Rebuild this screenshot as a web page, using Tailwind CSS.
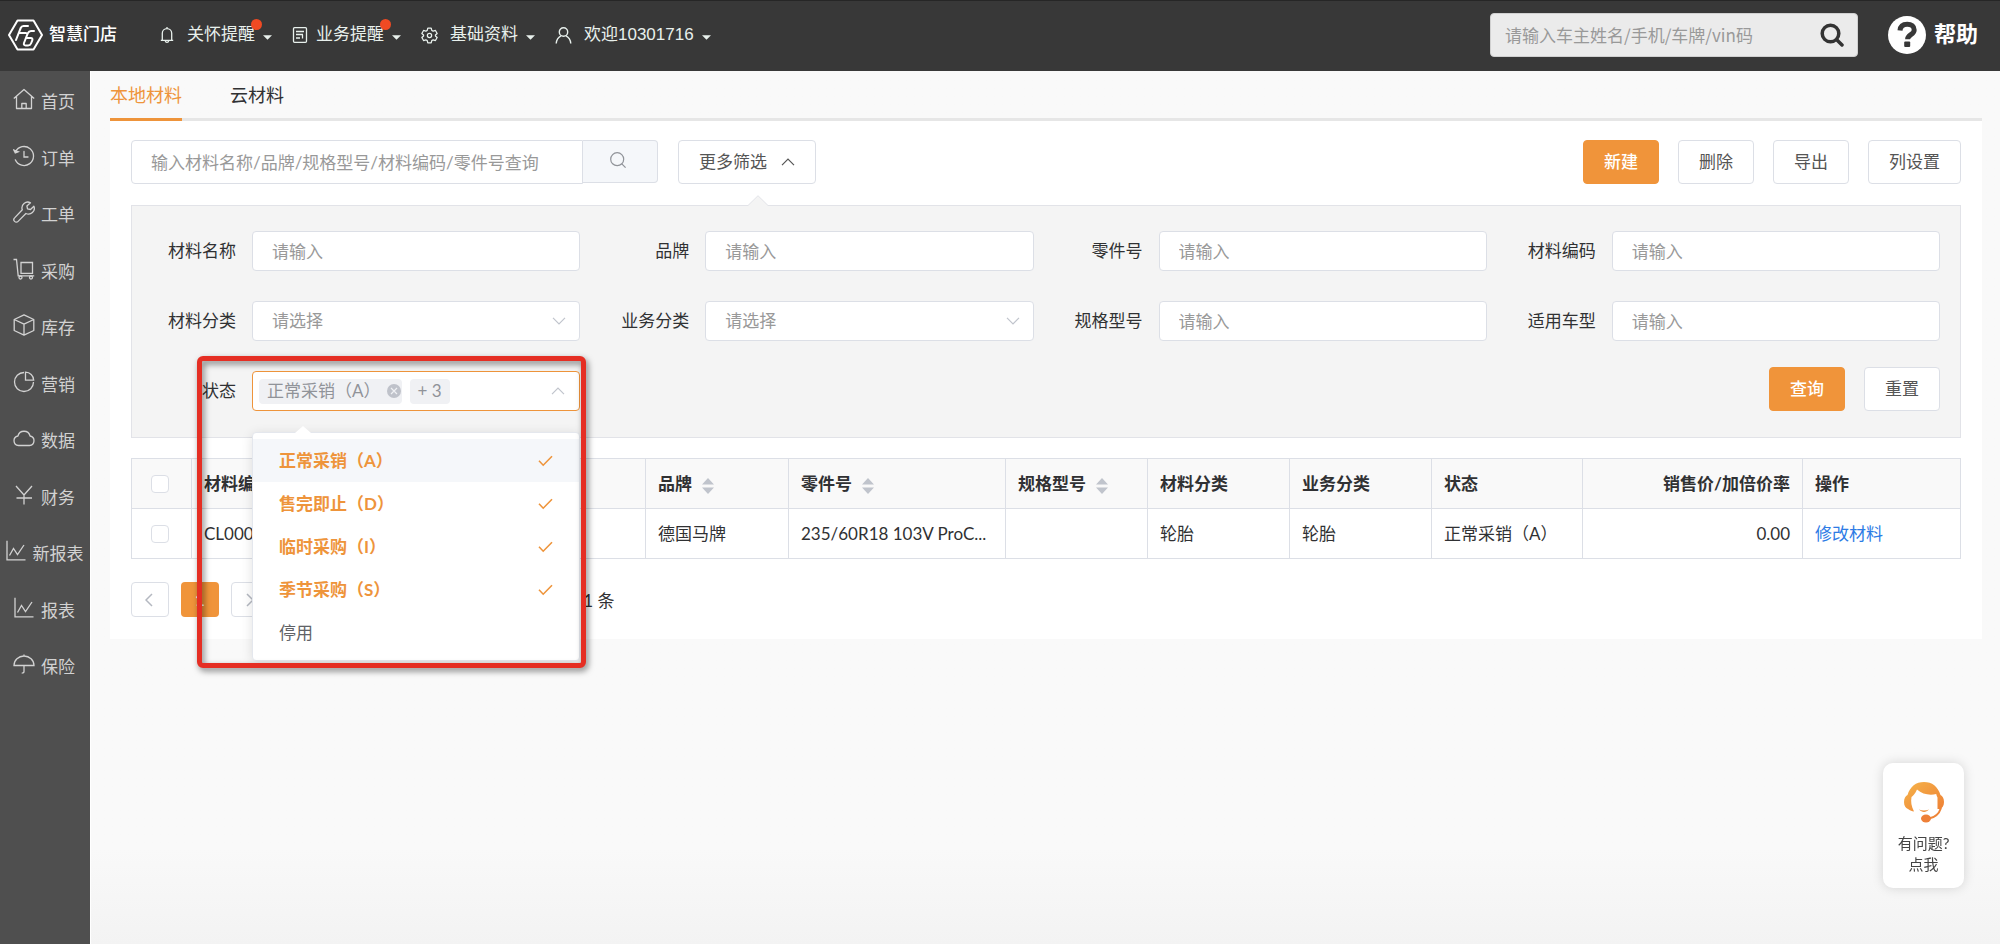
<!DOCTYPE html>
<html lang="zh-CN">
<head>
<meta charset="UTF-8">
<title>智慧门店 - 本地材料</title>
<script src="https://cdn.jsdelivr.net/npm/@tailwindcss/browser@4"></script>
</head>
<body class="flex min-h-screen flex-col bg-gradient-to-b from-[#f9f9f9] from-90% to-[#f3f3f3] text-[17px] leading-6 text-[#303133] font-[Lato,'Noto_Sans_CJK_SC',sans-serif]">

<header class="flex h-[71px] items-center border-t border-[#262626] bg-[#383838] pb-0.5 pl-2 pr-5 text-[#e8f0ec] font-['Liberation_Sans','Noto_Sans_CJK_SC',sans-serif]">
  <a href="#" class="flex items-center gap-1.5 text-white" aria-label="智慧门店">
    <svg class="h-8 w-[35px]" viewBox="0 0 35 32" fill="none" stroke="currentColor" stroke-width="2" stroke-linejoin="round" stroke-linecap="round"><path d="M9.500 1.500h16L34 16l-8.500 14.500h-16L1 16z"/><path d="M20 7h-4.500c-1.500 0-2.300.8-2.800 2L8 21M11 14h7M26 12h-3c-1.500 0-2.500.8-3.200 2.200L16 24c-.5 1.500.2 2.500 1.500 2.500H20c1.500 0 2.500-.7 3-2l1.300-3.200c.5-1.300-.2-2.300-1.500-2.300H18.500"/></svg>
    <span class="text-[17px] font-medium">智慧门店</span>
  </a>
  <nav class="ml-[42px] flex items-center gap-5">
    <a href="#" class="relative flex items-center">
      <svg class="mr-3 size-4" viewBox="0 0 16 16" fill="none" stroke="currentColor" stroke-width="1.300"><path d="M3.300 13.200V6.300a4.700 4.700 0 0 1 9.400 0v6.900M1.800 13.400h12.400M6.300 13.800c.3 2 3.100 2 3.400 0M8 1.800V0"/></svg>
      <span>关怀提醒</span>
      <svg class="ml-2 mt-1 h-[5px] w-[9px]" viewBox="0 0 10 5" fill="currentColor"><path d="M0 0h10L5 5z"/></svg>
      <span class="absolute -top-1 right-2.5 size-[11px] rounded-full bg-[#f04a23]"></span>
    </a>
    <a href="#" class="relative flex items-center">
      <svg class="mr-2 size-4" viewBox="0 0 16 16" fill="none" stroke="currentColor" stroke-width="1.300"><rect x="1.500" y=".7" width="13" height="14.600" rx="1"/><path d="M4 4.500h8M4 7.500h7M4 11h4M10.500 7.500v4"/></svg>
      <span>业务提醒</span>
      <svg class="ml-2 mt-1 h-[5px] w-[9px]" viewBox="0 0 10 5" fill="currentColor"><path d="M0 0h10L5 5z"/></svg>
      <span class="absolute -top-1 right-2.5 size-[11px] rounded-full bg-[#f04a23]"></span>
    </a>
    <a href="#" class="flex items-center">
      <svg class="mr-3 size-[17px]" viewBox="0 0 24 24" fill="none" stroke="currentColor" stroke-width="1.800" stroke-linejoin="round"><path d="M9.600 1.500h4.800l.8 3.200 2 1.200 3.200-1 2.400 4.200-2.400 2.300v1.200l2.400 2.300-2.400 4.200-3.200-1-2 1.200-.8 3.200H9.600l-.8-3.200-2-1.200-3.200 1L1.200 14.900l2.400-2.300v-1.200L1.200 9.100l2.400-4.200 3.200 1 2-1.200z"/><circle cx="12" cy="12" r="3"/></svg>
      <span>基础资料</span>
      <svg class="ml-2 mt-1 h-[5px] w-[9px]" viewBox="0 0 10 5" fill="currentColor"><path d="M0 0h10L5 5z"/></svg>
    </a>
    <a href="#" class="flex items-center">
      <svg class="mr-3 size-[17px]" viewBox="0 0 17 17" fill="none" stroke="currentColor" stroke-width="1.400"><circle cx="8.500" cy="5" r="4.200"/><path d="M1.200 16.500c.3-4 2.400-6.500 4.800-7.700M15.800 16.500c-.3-4-2.400-6.500-4.800-7.700"/></svg>
      <span>欢迎10301716</span>
      <svg class="ml-2 mt-1 h-[5px] w-[9px]" viewBox="0 0 10 5" fill="currentColor"><path d="M0 0h10L5 5z"/></svg>
    </a>
  </nav>
  <form class="ml-auto flex h-11 w-[368px] items-center rounded border border-[#d0d0d0] bg-[#ebebeb] pl-3.5 pr-[13px] font-['Noto_Sans_CJK_SC',sans-serif]">
    <input type="text" aria-label="车主搜索" placeholder="请输入车主姓名/手机/车牌/vin码" class="min-w-0 flex-1 bg-transparent text-[#333] outline-none placeholder:text-[#999]">
    <button type="button" aria-label="搜索" class="text-[#333]"><svg class="size-6" viewBox="0 0 24 24" fill="none" stroke="currentColor" stroke-width="3.500" stroke-linecap="round"><circle cx="10.500" cy="10.500" r="8.300"/><path d="M17 17l5 5"/></svg></button>
  </form>
  <a href="#" class="ml-[30px] flex items-center gap-2 text-[22px] font-bold text-white">
    <svg class="size-[38px]" viewBox="0 0 38 38"><circle cx="19" cy="19" r="19" fill="#fff"/><path d="M12 14.500c.3-4 3-6.300 7.200-6.300 4.300 0 7 2.300 7 5.700 0 4.800-6.600 4.600-6.600 9.300" fill="none" stroke="#383838" stroke-width="5"/><rect x="16.200" y="25.500" width="6" height="5.600" rx="1" fill="#383838"/></svg>
    <span class="pr-0.5">帮助</span>
  </a>
</header>

<div class="flex flex-1">
  <aside class="w-[90px] shrink-0 bg-[#4f4f4f] text-[#d2d2d2]">
    <ul class="pt-[3px]">
      <li class="odd:h-14 even:h-[57px]"><a href="#" class="flex h-full items-center justify-center gap-1.5 pr-0.5"><svg class="mb-1.5 size-[22px] shrink-0" viewBox="0 0 22 22" fill="none" stroke="currentColor" stroke-width="1.300" stroke-linejoin="round"><path d="M.8 10.500L11 1.500l10.200 9M3.500 8.500v12h15v-12M8.800 20.500v-5h4.400v5"/></svg>首页</a></li>
      <li class="odd:h-14 even:h-[57px]"><a href="#" class="flex h-full items-center justify-center gap-1.5 pr-0.5"><svg class="mb-1.5 size-[22px] shrink-0" viewBox="0 0 22 22" fill="none" stroke="currentColor" stroke-width="1.300" stroke-linecap="round"><path d="M2.500 6.800a9.500 9.500 0 1 1-.2 8M11 6.500V12h4"/><path d="M.8 5l1.500 3 3-1.300z" fill="currentColor"/></svg>订单</a></li>
      <li class="odd:h-14 even:h-[57px]"><a href="#" class="flex h-full items-center justify-center gap-1.5 pr-0.5"><svg class="mb-1.5 size-[22px] shrink-0" viewBox="0 0 22 22" fill="none" stroke="currentColor" stroke-width="1.300" stroke-linejoin="round"><path d="M17.500 1.800a5.800 5.800 0 0 0-8.200 7L1.600 16.900a2.400 2.400 0 0 0 3.500 3.500l7.800-7.900a5.800 5.800 0 0 0 8-7.300l-3.400 3.300-3-.6-.6-3z"/></svg>工单</a></li>
      <li class="odd:h-14 even:h-[57px]"><a href="#" class="flex h-full items-center justify-center gap-1.5 pr-0.5"><svg class="mb-1.5 size-[22px] shrink-0" viewBox="0 0 22 22" fill="none" stroke="currentColor" stroke-width="1.300"><path d="M.5 1.500h3l1.700 16.300h16M8 4.500h11.500v10.800H8z"/><circle cx="7.500" cy="19.500" r="1.500"/><circle cx="18" cy="19.500" r="1.500"/></svg>采购</a></li>
      <li class="odd:h-14 even:h-[57px]"><a href="#" class="flex h-full items-center justify-center gap-1.5 pr-0.5"><svg class="mb-1.5 size-[22px] shrink-0" viewBox="0 0 22 22" fill="none" stroke="currentColor" stroke-width="1.300" stroke-linejoin="round"><path d="M11 .8l9.800 4.700v11L11 21.200l-9.800-4.700v-11zM1.200 5.500L11 10.200l9.800-4.700M11 10.200v11"/></svg>库存</a></li>
      <li class="odd:h-14 even:h-[57px]"><a href="#" class="flex h-full items-center justify-center gap-1.5 pr-0.5"><svg class="mb-1.5 size-[22px] shrink-0" viewBox="0 0 22 22" fill="none" stroke="currentColor" stroke-width="1.300"><path d="M11 1.500a9.500 9.500 0 1 0 9.500 9.500"/><path d="M12.500 1.200v8h8.200a8.300 8.300 0 0 0-8.200-8z"/></svg>营销</a></li>
      <li class="odd:h-14 even:h-[57px]"><a href="#" class="flex h-full items-center justify-center gap-1.5 pr-0.5"><svg class="mb-1.5 size-[22px] shrink-0" viewBox="0 0 22 22" fill="none" stroke="currentColor" stroke-width="1.300"><path d="M5.500 18.500a4.800 4.800 0 0 1-.6-9.500 6.300 6.300 0 0 1 12.200 0 4.800 4.800 0 0 1-.6 9.500z"/></svg>数据</a></li>
      <li class="odd:h-14 even:h-[57px]"><a href="#" class="flex h-full items-center justify-center gap-1.5 pr-0.5"><svg class="mb-1.5 size-[22px] shrink-0" viewBox="0 0 22 22" fill="none" stroke="currentColor" stroke-width="1.300"><path d="M3 2l8 9 8-9M11 11v9.500M3.500 14h15.500"/></svg>财务</a></li>
      <li class="odd:h-14 even:h-[57px]"><a href="#" class="flex h-full items-center justify-center gap-1.5 pr-0.5"><svg class="mb-1.5 size-[22px] shrink-0" viewBox="0 0 22 22" fill="none" stroke="currentColor" stroke-width="1.300"><path d="M2 .8v19h18.500M4.500 15.500l4-7 4 6 6.500-9.500"/></svg>新报表</a></li>
      <li class="odd:h-14 even:h-[57px]"><a href="#" class="flex h-full items-center justify-center gap-1.5 pr-0.5"><svg class="mb-1.5 size-[22px] shrink-0" viewBox="0 0 22 22" fill="none" stroke="currentColor" stroke-width="1.300"><path d="M2 .8v19h18.500M4.500 15.500l4-7 4 6 6.500-9.500"/></svg>报表</a></li>
      <li class="odd:h-14 even:h-[57px]"><a href="#" class="flex h-full items-center justify-center gap-1.5 pr-0.5"><svg class="mb-1.5 size-[22px] shrink-0" viewBox="0 0 22 22" fill="none" stroke="currentColor" stroke-width="1.300"><path d="M1 12.500a10 9.500 0 0 1 20 0zM11 3V1.500M11 12.500v6c0 1.200-.7 1.600-2.300 1.600"/></svg>保险</a></li>
    </ul>
  </aside>

  <main class="min-w-0 flex-1 border-l border-white pl-[19px] pr-[18px]">
    <nav class="flex h-[50px] gap-12 border-b-[3px] border-[#e6e6e6] text-[18px]">
      <a href="#" class="-mb-[3px] border-b-[3px] border-[#ee943b] pt-3 text-[#ee943b]">本地材料</a>
      <a href="#" class="pt-3">云材料</a>
    </nav>

    <section class="bg-white px-[21px] pb-[22px] pt-[19px]">
      <div class="flex items-start">
        <div class="flex w-[527px] items-start">
          <input type="text" aria-label="查询材料" placeholder="输入材料名称/品牌/规格型号/材料编码/零件号查询" class="h-11 min-w-0 flex-1 rounded-l border border-[#dcdfe6] px-[19px] outline-none placeholder:text-[#999]">
          <button type="button" aria-label="查询" class="flex h-[43px] w-[75px] items-center justify-center rounded-r border border-l-0 border-[#dcdfe6] bg-[#f5f7fa] pb-1 pr-1 text-[#909399]"><svg class="size-4" viewBox="0 0 16 16" fill="none" stroke="currentColor" stroke-width="1.200"><circle cx="7.200" cy="7.200" r="6.500"/><path d="M11.800 11.800l3.800 3.800"/></svg></button>
        </div>
        <button type="button" aria-expanded="true" class="ml-5 flex h-11 items-center gap-3.5 rounded border border-[#dcdfe6] bg-white px-5 text-[#555]">更多筛选<svg class="h-2 w-3.5" viewBox="0 0 14 8" fill="none" stroke="currentColor" stroke-width="1.200"><path d="M1 7.200l6-6 6 6"/></svg></button>
        <div class="ml-auto flex gap-[19px] text-[#555]">
          <button type="button" class="h-11 rounded border border-[#f0943a] bg-[#f0943a] px-5 font-medium text-white">新建</button>
          <button type="button" class="h-11 rounded border border-[#dcdfe6] bg-white px-5">删除</button>
          <button type="button" class="h-11 rounded border border-[#dcdfe6] bg-white px-5">导出</button>
          <button type="button" class="h-11 rounded border border-[#dcdfe6] bg-white px-5">列设置</button>
        </div>
      </div>

      <form class="relative mt-[21px] border border-[#e2e3e8] bg-[#f4f4f4] px-5 pb-[26px] pt-[25px]">
        <svg class="absolute -top-[11px] left-[616px] h-[11px] w-5" viewBox="0 0 20 11"><path d="M0 10.500L10 .7l10 9.800V11H0z" fill="#f4f4f4"/><path d="M0 10.500L10 .7l10 9.800" fill="none" stroke="#e2e3e8"/></svg>
        <div class="grid grid-cols-4 gap-x-[25px] gap-y-[30px]">
          <div class="flex items-center gap-4"><label for="f1" class="w-[84px] shrink-0 text-right">材料名称</label><input id="f1" type="text" placeholder="请输入" class="h-10 min-w-0 flex-1 rounded border border-[#dcdfe6] bg-white px-[19px] placeholder:text-[#999]"></div>
          <div class="flex items-center gap-4"><label for="f2" class="w-[84px] shrink-0 text-right">品牌</label><input id="f2" type="text" placeholder="请输入" class="h-10 min-w-0 flex-1 rounded border border-[#dcdfe6] bg-white px-[19px] placeholder:text-[#999]"></div>
          <div class="flex items-center gap-4"><label for="f3" class="w-[84px] shrink-0 text-right">零件号</label><input id="f3" type="text" placeholder="请输入" class="h-10 min-w-0 flex-1 rounded border border-[#dcdfe6] bg-white px-[19px] placeholder:text-[#999]"></div>
          <div class="flex items-center gap-4"><label for="f4" class="w-[84px] shrink-0 text-right">材料编码</label><input id="f4" type="text" placeholder="请输入" class="h-10 min-w-0 flex-1 rounded border border-[#dcdfe6] bg-white px-[19px] placeholder:text-[#999]"></div>
          <div class="flex items-center gap-4"><label for="f5" class="w-[84px] shrink-0 text-right">材料分类</label><div class="relative min-w-0 flex-1"><select id="f5" class="block h-10 w-full appearance-none rounded border border-[#dcdfe6] bg-white px-[19px] text-[#999]"><option>请选择</option></select><svg class="pointer-events-none absolute right-3.5 top-4 h-2 w-3.5 text-[#c0c4cc]" viewBox="0 0 14 8" fill="none" stroke="currentColor" stroke-width="1.200"><path d="M1 .8l6 6 6-6"/></svg></div></div>
          <div class="flex items-center gap-4"><label for="f6" class="w-[84px] shrink-0 text-right">业务分类</label><div class="relative min-w-0 flex-1"><select id="f6" class="block h-10 w-full appearance-none rounded border border-[#dcdfe6] bg-white px-[19px] text-[#999]"><option>请选择</option></select><svg class="pointer-events-none absolute right-3.5 top-4 h-2 w-3.5 text-[#c0c4cc]" viewBox="0 0 14 8" fill="none" stroke="currentColor" stroke-width="1.200"><path d="M1 .8l6 6 6-6"/></svg></div></div>
          <div class="flex items-center gap-4"><label for="f7" class="w-[84px] shrink-0 text-right">规格型号</label><input id="f7" type="text" placeholder="请输入" class="h-10 min-w-0 flex-1 rounded border border-[#dcdfe6] bg-white px-[19px] placeholder:text-[#999]"></div>
          <div class="flex items-center gap-4"><label for="f8" class="w-[84px] shrink-0 text-right">适用车型</label><input id="f8" type="text" placeholder="请输入" class="h-10 min-w-0 flex-1 rounded border border-[#dcdfe6] bg-white px-[19px] placeholder:text-[#999]"></div>
        </div>
        <div class="mt-[26px] grid grid-cols-4 items-end gap-x-[25px]">
          <div class="relative flex items-center gap-4">
            <label for="status" class="w-[84px] shrink-0 text-right">状态</label>
            <button id="status" type="button" aria-haspopup="listbox" aria-expanded="true" class="flex h-10 min-w-0 flex-1 items-center gap-2 rounded border border-[#ee943b] bg-white pl-1.5 pr-3.5 text-[#909399]">
              <span class="flex h-[25px] items-center rounded bg-[#f0f1f4] pl-2 pr-px">正常采销（A）<svg class="ml-1.5 size-3.5" viewBox="0 0 14 14"><circle cx="7" cy="7" r="7" fill="#bfc2ca"/><path d="M4 4l6 6M10 4l-6 6" stroke="#f0f1f4" stroke-width="1.200"/></svg></span>
              <span class="flex h-[25px] items-center rounded bg-[#f0f1f4] px-2">+ 3</span>
              <svg class="ml-auto h-2 w-3.5 text-[#c0c4cc]" viewBox="0 0 14 8" fill="none" stroke="currentColor" stroke-width="1.200"><path d="M1 7.200l6-6 6 6"/></svg>
            </button>
            <div class="absolute left-[100px] right-0 top-[61px] z-10 rounded border border-[#e4e7ed] bg-white pb-1.5 pt-1.5 shadow-[0_2px_12px_rgba(0,0,0,0.12)]">
              <svg class="absolute -top-[7px] left-[42px] h-[7px] w-4" viewBox="0 0 16 7" fill="#fff"><path d="M0 7l8-7 8 7z"/></svg>
              <ul role="listbox" aria-label="状态" class="text-[#ee943b]">
                <li role="option" aria-selected="true" class="flex h-[43px] items-center justify-between bg-[#f5f7fa] pl-[26px] pr-[26px] font-bold">正常采销（A）<svg class="h-3 w-[15px]" viewBox="0 0 15 12" fill="none" stroke="currentColor" stroke-width="1.600"><path d="M1 5.800l4.200 4.400L14 1.200"/></svg></li>
                <li role="option" aria-selected="true" class="flex h-[43px] items-center justify-between pl-[26px] pr-[26px] font-bold">售完即止（D）<svg class="h-3 w-[15px]" viewBox="0 0 15 12" fill="none" stroke="currentColor" stroke-width="1.600"><path d="M1 5.800l4.200 4.400L14 1.200"/></svg></li>
                <li role="option" aria-selected="true" class="flex h-[43px] items-center justify-between pl-[26px] pr-[26px] font-bold">临时采购（I）<svg class="h-3 w-[15px]" viewBox="0 0 15 12" fill="none" stroke="currentColor" stroke-width="1.600"><path d="M1 5.800l4.200 4.400L14 1.200"/></svg></li>
                <li role="option" aria-selected="true" class="flex h-[43px] items-center justify-between pl-[26px] pr-[26px] font-bold">季节采购（S）<svg class="h-3 w-[15px]" viewBox="0 0 15 12" fill="none" stroke="currentColor" stroke-width="1.600"><path d="M1 5.800l4.200 4.400L14 1.200"/></svg></li>
                <li role="option" aria-selected="false" class="flex h-[43px] items-center pl-[26px] text-[#606266]">停用</li>
              </ul>
            </div>
            <div class="pointer-events-none absolute -right-1.5 -top-[15px] left-[45px] z-20 h-[312px] rounded-md border-[5px] border-[#e52e23] drop-shadow-[2px_3px_3px_rgba(0,0,0,0.5)]"></div>
          </div>
          <div class="col-start-4 flex justify-end gap-[19px]">
            <button type="button" class="h-11 rounded border border-[#f0943a] bg-[#f0943a] px-5 font-medium text-white">查询</button>
            <button type="reset" class="h-11 rounded border border-[#dcdfe6] bg-white px-5 text-[#555]">重置</button>
          </div>
        </div>
      </form>

      <table class="mt-5 w-full table-fixed border-collapse text-left">
        <colgroup><col class="w-[60px]"><col class="w-[214px]"><col class="w-[240px]"><col class="w-[143px]"><col class="w-[217px]"><col class="w-[142px]"><col class="w-[142px]"><col class="w-[142px]"><col class="w-[151px]"><col class="w-[220px]"><col class="w-[158px]"></colgroup>
        <thead class="bg-[#f9f9f9] font-bold text-[#303133]">
          <tr class="h-[50px]">
            <th class="border border-[#dcdfe6] pr-1"><input type="checkbox" aria-label="全选" class="mx-auto block size-[18px] appearance-none rounded-sm border border-[#dcdfe6] bg-white"></th>
            <th class="border border-[#dcdfe6] px-3">材料编码</th>
            <th class="border border-[#dcdfe6] px-3">材料名称</th>
            <th class="border border-[#dcdfe6] px-3"><span class="flex items-center gap-2.5">品牌<svg class="mt-1 h-4 w-3" viewBox="0 0 12 16" fill="#c0c4cc"><path d="M6 0l6 6.500H0zM6 16l6-6.500H0z"/></svg></span></th>
            <th class="border border-[#dcdfe6] px-3"><span class="flex items-center gap-2.5">零件号<svg class="mt-1 h-4 w-3" viewBox="0 0 12 16" fill="#c0c4cc"><path d="M6 0l6 6.500H0zM6 16l6-6.500H0z"/></svg></span></th>
            <th class="border border-[#dcdfe6] px-3"><span class="flex items-center gap-2.5">规格型号<svg class="mt-1 h-4 w-3" viewBox="0 0 12 16" fill="#c0c4cc"><path d="M6 0l6 6.500H0zM6 16l6-6.500H0z"/></svg></span></th>
            <th class="border border-[#dcdfe6] px-3">材料分类</th>
            <th class="border border-[#dcdfe6] px-3">业务分类</th>
            <th class="border border-[#dcdfe6] px-3">状态</th>
            <th class="border border-[#dcdfe6] px-3 text-right">销售价/加倍价率</th>
            <th class="border border-[#dcdfe6] px-3">操作</th>
          </tr>
        </thead>
        <tbody>
          <tr class="h-[50px]">
            <td class="border border-[#dcdfe6] pr-1"><input type="checkbox" aria-label="选择此行" class="mx-auto block size-[18px] appearance-none rounded-sm border border-[#dcdfe6] bg-white"></td>
            <td class="border border-[#dcdfe6] px-3">CL0001</td>
            <td class="border border-[#dcdfe6] px-3"></td>
            <td class="border border-[#dcdfe6] px-3">德国马牌</td>
            <td class="whitespace-nowrap border border-[#dcdfe6] px-3">235/60R18 103V ProC...</td>
            <td class="border border-[#dcdfe6] px-3"></td>
            <td class="border border-[#dcdfe6] px-3">轮胎</td>
            <td class="border border-[#dcdfe6] px-3">轮胎</td>
            <td class="border border-[#dcdfe6] px-3">正常采销（A）</td>
            <td class="border border-[#dcdfe6] px-3 text-right">0.00</td>
            <td class="border border-[#dcdfe6] px-3"><a href="#" class="text-[#2d7be5]">修改材料</a></td>
          </tr>
        </tbody>
      </table>

      <nav aria-label="分页" class="mt-[23px] flex items-center gap-3">
        <button type="button" aria-label="上一页" class="flex h-[35px] w-[38px] items-center justify-center rounded border border-[#dcdfe6] pr-0.5 text-[#b4b8c0]"><svg class="h-3.5 w-2" viewBox="0 0 8 14" fill="none" stroke="currentColor" stroke-width="1.500"><path d="M7 1L1 7l6 6"/></svg></button>
        <button type="button" aria-current="page" class="h-[35px] w-[38px] rounded bg-[#f0943a] font-bold text-white">1</button>
        <button type="button" aria-label="下一页" class="flex h-[35px] w-[38px] items-center justify-center rounded border border-[#dcdfe6] text-[#b4b8c0]"><svg class="h-3.5 w-2" viewBox="0 0 8 14" fill="none" stroke="currentColor" stroke-width="1.500"><path d="M1 1l6 6-6 6"/></svg></button>
        <span class="ml-[281px] pt-0.5">共 1 条</span>
      </nav>
    </section>
  </main>
</div>

<button type="button" class="fixed bottom-14 right-9 flex h-[125px] w-[81px] flex-col items-center rounded-[10px] bg-white pt-[19px] text-[15px] leading-[21px] text-[#444] shadow-[0_0_12px_rgba(0,0,0,0.15)]">
  <svg class="mb-2.5 h-[41px] w-10" viewBox="0 0 40 41" fill="none"><defs><linearGradient id="hair" x1="0" y1="0" x2="1" y2="1"><stop offset="0" stop-color="#f5b44a"/><stop offset="1" stop-color="#ee7f35"/></linearGradient></defs><path d="M3.500 13C6 4.500 12 0 20 0s14 4.500 16.500 13c2 1 3.500 3.500 3.500 7s-1.500 6-4 7h-2.500V15.500c-.5-1-1-2-1.300-3.500-6 1.500-14 .5-19.200-4.500C11 12 9 14 7.500 15c-.8 5-.3 9 2.500 14.500-2-.2-4-1.200-6-2.500-2.500-1-4-3.500-4-7s1.500-6 3.500-7z" fill="url(#hair)"/><path d="M15 27.500c3 3.200 7 3.200 10 0-3 1.300-7 1.300-10 0z" fill="#ee8f3a"/><path d="M37 26c-2 6-6 9.500-12 10.500" stroke="#ee8538" stroke-width="2"/><ellipse cx="22" cy="36.500" rx="5" ry="4" fill="#ee8038"/></svg>
  <span>有问题?</span><span>点我</span>
</button>
</body>
</html>
